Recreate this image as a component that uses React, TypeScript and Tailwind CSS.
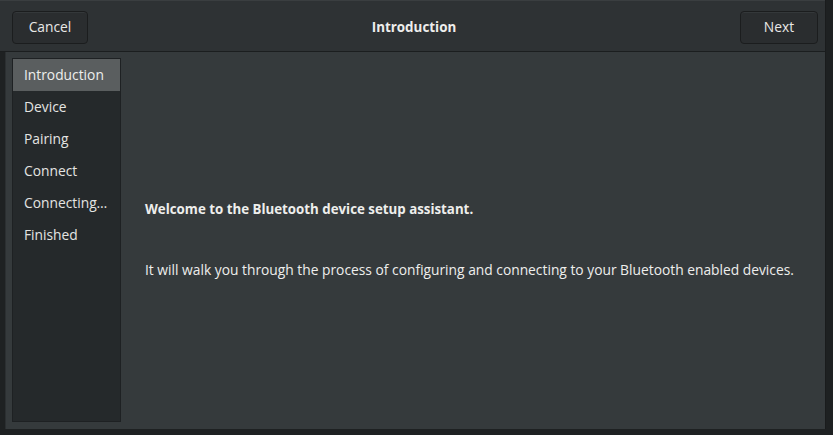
import React from 'react';

const steps = ['Introduction', 'Device', 'Pairing', 'Connect', 'Connecting…', 'Finished'];

export default function App() {
  const active = 'Introduction';

  return (
    <div
      className="w-[833px] h-[435px] bg-[#1e2122] text-[#eeeeec] text-[13.8px] overflow-hidden"
      style={{ fontFamily: '"Open Sans", "Noto Sans", sans-serif' }}
    >
      <div className="w-[826px] h-[429px] flex flex-col border-r border-[#1a1c1d]">
        {/* header bar */}
        <div className="h-[52px] shrink-0 flex items-center justify-between pl-[12px] pr-[7px] bg-[#2e3234] border-t border-[#3a3e40] border-b border-b-[#1b1e1f]">
          <button className="w-[76px] h-[33px] mt-[3px] pb-[1px] rounded-[4px] bg-[#2a2d2f] border border-[#1b1d1e] shadow-[inset_0_1px_0_#34383a] text-[#e8e8e6]">
            Cancel
          </button>
          <div className="font-bold text-[13.4px] mt-[3px] text-[#eeeeec]">Introduction</div>
          <button className="w-[78px] h-[33px] mt-[3px] pb-[1px] rounded-[4px] bg-[#2a2d2f] border border-[#1b1d1e] shadow-[inset_0_1px_0_#34383a] text-[#e8e8e6]">
            Next
          </button>
        </div>

        {/* body */}
        <div className="flex-1 flex bg-[#353a3c] border-l border-[#2b2f31] ml-[5px] pl-[6px] pt-[6px] pb-[7px]">
          <div className="w-[109px] bg-[#25292b] border border-[#1e2123] flex flex-col">
            {steps.map(s => (
              <div
                key={s}
                className={`h-[32px] flex items-center pl-[11px] ${s === active ? 'bg-[#5a5e5f] text-[#eeeeec]' : 'text-[#e4e4e2]'}`}
              >
                {s}
              </div>
            ))}
          </div>
          <div className="flex-1 flex flex-col justify-center pl-[24px]">
            <div className="font-bold text-[13.3px]">Welcome to the Bluetooth device setup assistant.</div>
            <div className="mt-[40px]">
              It will walk you through the process of configuring and connecting to your Bluetooth enabled devices.
            </div>
          </div>
        </div>
      </div>
    </div>
  );
}
